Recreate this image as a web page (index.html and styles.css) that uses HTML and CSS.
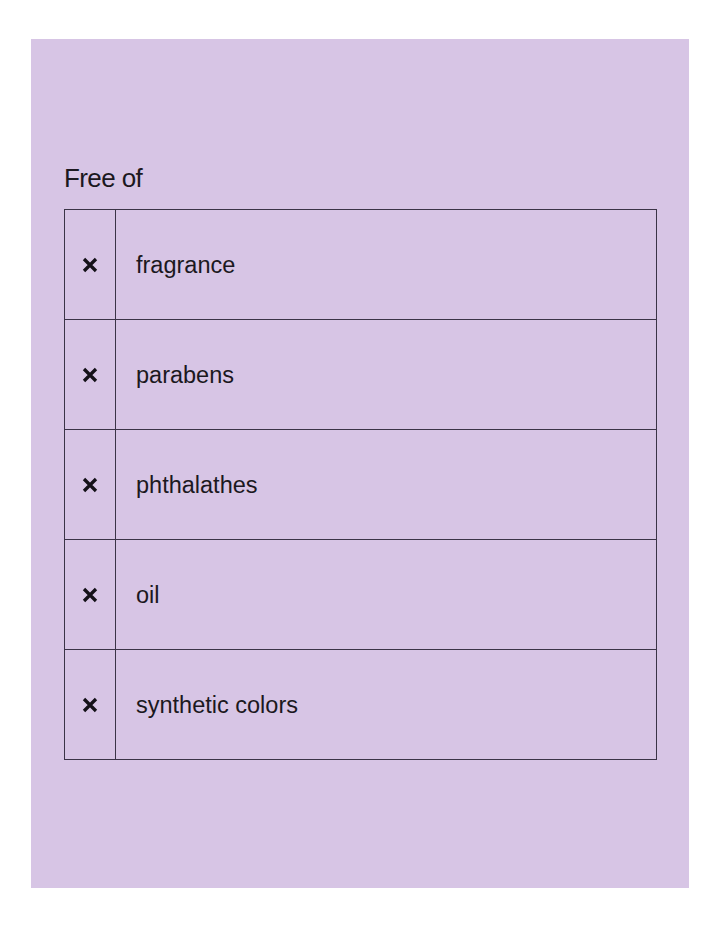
FILE: index.html
```html
<!DOCTYPE html>
<html lang="en">
<head>
<meta charset="utf-8">
<title>Free of</title>
<link rel="stylesheet" href="styles.css">
</head>
<body>
<section class="card">
  <h2 class="title">Free of</h2>
  <ul class="list">
    <li class="row"><span class="mark"><svg viewBox="0 0 16 16" width="16" height="16"><path d="M2 2 L14 14 M14 2 L2 14" /></svg></span><span class="label">fragrance</span></li>
    <li class="row"><span class="mark"><svg viewBox="0 0 16 16" width="16" height="16"><path d="M2 2 L14 14 M14 2 L2 14" /></svg></span><span class="label">parabens</span></li>
    <li class="row"><span class="mark"><svg viewBox="0 0 16 16" width="16" height="16"><path d="M2 2 L14 14 M14 2 L2 14" /></svg></span><span class="label">phthalathes</span></li>
    <li class="row"><span class="mark"><svg viewBox="0 0 16 16" width="16" height="16"><path d="M2 2 L14 14 M14 2 L2 14" /></svg></span><span class="label">oil</span></li>
    <li class="row"><span class="mark"><svg viewBox="0 0 16 16" width="16" height="16"><path d="M2 2 L14 14 M14 2 L2 14" /></svg></span><span class="label">synthetic colors</span></li>
  </ul>
</section>
</body>
</html>
```
FILE: styles.css
```css
* { box-sizing: border-box; }
html, body { margin: 0; padding: 0; background: #ffffff; }
body {
  font-family: "Liberation Sans", Arial, sans-serif;
  color: #1b1820;
  padding: 39px 31px;
}
.card {
  width: 658px;
  height: 849px;
  background: #d7c5e5;
  padding: 126px 32px 0 33px;
}
.title {
  margin: 0 0 18px 0;
  font-size: 26px;
  line-height: 26px;
  font-weight: 400;
  letter-spacing: -0.6px;
}
.list {
  list-style: none;
  margin: 0;
  padding: 0;
  border-top: 1px solid #3b3447;
  border-left: 1px solid #3b3447;
  border-right: 1px solid #3b3447;
}
.row {
  display: grid;
  grid-template-columns: 51px 1fr;
  height: 110px;
  border-bottom: 1px solid #3b3447;
}
.mark {
  display: flex;
  align-items: center;
  justify-content: center;
  border-right: 1px solid #3b3447;
}
.mark svg path {
  stroke: #141118;
  stroke-width: 3.3;
  fill: none;
}
.label {
  display: flex;
  align-items: center;
  padding-left: 20px;
  padding-top: 2px;
  font-size: 23.5px;
  letter-spacing: 0;
}
```
